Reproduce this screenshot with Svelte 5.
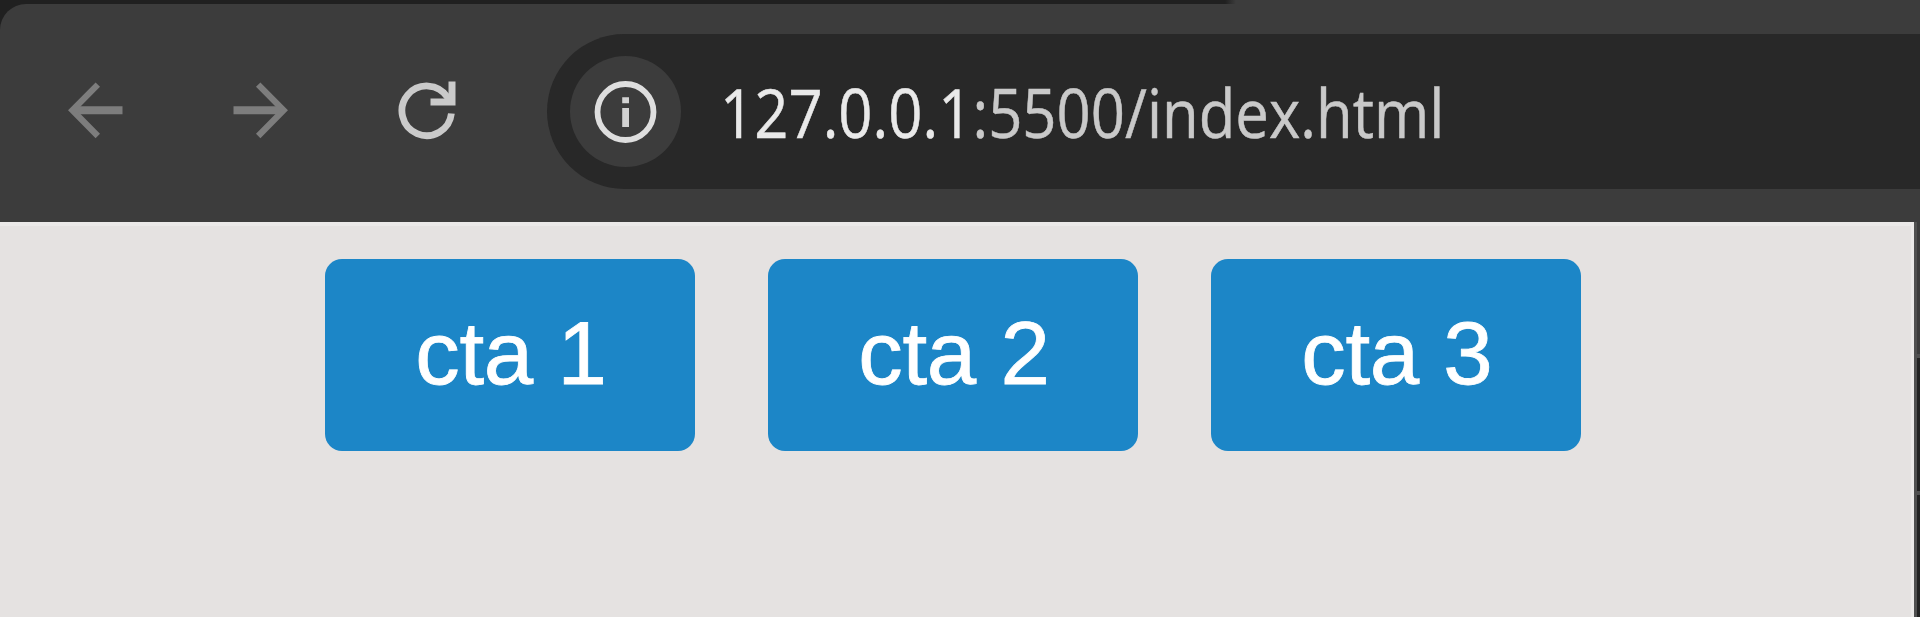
<script>
  const actions = ['cta 1', 'cta 2', 'cta 3'];
</script>

<div class="window">
  <header class="chrome">
    <div class="toolbar">
      <svg class="icon back" viewBox="0 0 60 60" fill="none">
        <path d="M57.5 30.3H9" stroke-width="8" />
        <path d="M32.8 4.6L7.4 30.3L32.8 56" stroke-width="6.2" />
      </svg>
      <svg class="icon forward" viewBox="0 0 60 60" fill="none">
        <path d="M2.5 30.3H51" stroke-width="8" />
        <path d="M27.2 4.6L52.6 30.3L27.2 56" stroke-width="6.2" />
      </svg>
      <svg class="icon reload" viewBox="0 0 60 60" fill="none">
        <path d="M53.4 33.5A24.8 24.8 0 1 1 49.5 17.2L53 23" stroke-width="6.8" />
        <path d="M54 1.5V22H32.5" stroke-width="7" />
      </svg>
      <div class="address">
        <div class="site">
          <svg viewBox="0 0 64 64" fill="none">
            <circle cx="31.5" cy="32" r="28" stroke="#dedede" stroke-width="5.8" />
            <path d="M31.6 17.2V23.2M31.6 28V47" stroke="#d2d2d2" stroke-width="6.8" />
          </svg>
        </div>
        <div class="url"><span class="host">127.0.0.1</span>:5500/index.html</div>
      </div>
    </div>
  </header>
  <div class="body">
    <main>
      {#each actions as label}
        <button>{label}</button>
      {/each}
    </main>
    <aside>
      <div class="rail top"></div>
      <div class="rail mid"></div>
      <div class="rail low"></div>
    </aside>
  </div>
</div>

<style>
  :global(body) {
    margin: 0;
    overflow: hidden;
  }
  .window {
    display: flex;
    flex-direction: column;
    width: 1920px;
    height: 617px;
    overflow: hidden;
    background: #3c3c3c;
  }
  .chrome {
    box-sizing: border-box;
    height: 222px;
    padding-top: 4px;
    background: linear-gradient(#202020, #202020) 0 0 / 1200px 32px no-repeat,
      linear-gradient(90deg, #202020 70%, #3c3c3c) 1200px 0 / 36px 4px no-repeat, #3c3c3c;
  }
  .toolbar {
    display: flex;
    align-items: flex-start;
    box-sizing: border-box;
    height: 218px;
    padding: 30px 0 0 65px;
    border-top-left-radius: 26px;
    background: #3c3c3c;
  }
  .icon {
    flex: none;
    width: 60px;
    height: 60px;
    margin-top: 46px;
    stroke: #7d7d7d;
  }
  .forward {
    margin-left: 106px;
  }
  .reload {
    margin-left: 107px;
    stroke: #cacaca;
  }
  .address {
    display: flex;
    align-items: center;
    flex: 1;
    box-sizing: border-box;
    height: 155px;
    margin-left: 89px;
    padding-left: 23px;
    border-radius: 78px 0 0 78px;
    background: #282828;
  }
  .site {
    display: grid;
    place-items: center;
    flex: none;
    width: 111px;
    height: 111px;
    border-radius: 50%;
    background: #3c3c3c;
  }
  .site svg {
    width: 64px;
    height: 64px;
  }
  .url {
    margin-left: 39px;
    font: 400 67px/90px "Open Sans", sans-serif;
    white-space: nowrap;
    color: #c9c9c9;
    -webkit-text-stroke: 0.5px currentColor;
    transform: scaleX(0.893);
    transform-origin: 0 50%;
  }
  .host {
    color: #e9e9e9;
  }
  .body {
    display: flex;
    flex: 1;
  }
  main {
    display: flex;
    align-items: flex-start;
    gap: 73.7px;
    box-sizing: border-box;
    width: 1914px;
    padding: 33px 0 0 325.3px;
    border-top: 4px solid #ebe9e8;
    border-right: 3px solid #ebe9e8;
    background: #e5e2e1;
  }
  button {
    flex: none;
    width: 369.3px;
    height: 192px;
    padding: 0 0 1px 2px;
    border: 0;
    border-radius: 17px;
    background: #1c86c7;
    color: #fff;
    font: 400 88.9px/1 "Liberation Sans", Arial, sans-serif;
    letter-spacing: -0.3px;
    -webkit-text-stroke: 0.8px #fff;
  }
  aside {
    display: flex;
    flex-direction: column;
    gap: 4px;
    box-sizing: border-box;
    width: 6px;
    padding-left: 3px;
    background: #505050;
  }
  .rail {
    background: #222;
  }
  .top {
    height: 132px;
    background: #3c3c3c;
  }
  .mid {
    height: 133px;
  }
  .low {
    flex: 1;
  }
</style>
